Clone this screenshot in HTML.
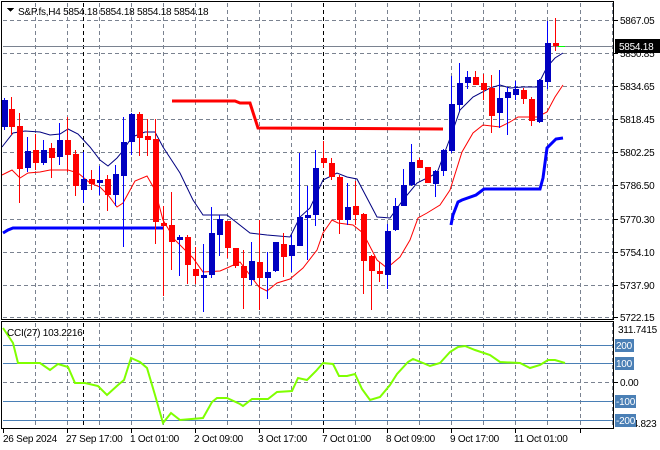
<!DOCTYPE html>
<html><head><meta charset="utf-8"><style>
html,body{margin:0;padding:0;background:#fff;width:660px;height:450px;overflow:hidden}
svg{display:block;font-family:"Liberation Sans",sans-serif;font-size:10px;letter-spacing:-0.25px}
</style></head><body>
<svg width="660" height="450" xmlns="http://www.w3.org/2000/svg" shape-rendering="crispEdges">
<rect width="660" height="450" fill="#fff"/>
<g stroke="#7a8290" stroke-dasharray="4,3" stroke-width="1">
<path d="M3 20.5H613M3 53.5H613M3 86.5H613M3 119.5H613M3 152.5H613M3 185.5H613M3 219.5H613M3 252.5H613M3 285.5H613M3 317.5H613"/>
<path d="M35.5 3V319M67.5 3V319M99.5 3V319M131.5 3V319M163.5 3V319M195.5 3V319M227.5 3V319M259.5 3V319M291.5 3V319M355.5 3V319M387.5 3V319M419.5 3V319M451.5 3V319M483.5 3V319M515.5 3V319M547.5 3V319M580.5 3V319M612.5 3V319"/>
<path d="M35.5 323V428M67.5 323V428M99.5 323V428M131.5 323V428M163.5 323V428M195.5 323V428M227.5 323V428M259.5 323V428M291.5 323V428M355.5 323V428M387.5 323V428M419.5 323V428M451.5 323V428M483.5 323V428M515.5 323V428M547.5 323V428M580.5 323V428M612.5 323V428"/>
<path d="M3 382.5H613"/>
</g>
<g stroke="#000" stroke-dasharray="4,3"><path d="M83.5 3V319M323.5 3V319M83.5 323V428M323.5 323V428"/></g>
<g stroke="#4a7fb5"><path d="M3 345.5H613M3 363.5H613M3 401.5H613M3 420.5H613"/></g>
<path d="M3 46.5H613" stroke="#7a8290"/>
<g fill="none" shape-rendering="auto" stroke-width="3">
<polyline stroke="#0000ff" points="3,233 8,230 13,228 163,228"/>
<polyline stroke="#0000ff" points="451,225 453,215 458,202 462,200 476,195 484,189 540,189 543,178 547,148 556,139 563,138"/>
<polyline stroke="#ff0000" points="172,101 235,101 240,103 250,103 258,128 443,129"/>
</g>
<g fill="none" shape-rendering="auto" stroke-width="1">
<polyline stroke="#000080" points="2,147 13,133 25,131 40,132 50,135 60,134 68,129 78,134 90,147 100,160 108,166 117,158 122,152 132,137 145,132 155,132 163,147 180,173 193,200 203,215 227,215 250,233 267,235 290,237 300,217 310,208 323,180 337,173 347,177 357,179 377,217 390,218 403,200 417,183 437,173 443,157 452,133 460,110 473,97 490,88 500,85 510,88 523,87 537,87 547,67 555,58 563,53"/>
<polyline stroke="#ff0000" points="2,175 12,170 20,178 28,173 40,172 50,170 68,170 78,173 90,183 100,187 108,195 117,207 123,203 135,181 147,176 155,190 163,220 175,240 193,258 203,272 220,271 227,268 240,262 259,287 267,291 277,283 290,279 303,268 317,250 323,233 332,220 338,223 353,225 363,233 377,260 387,268 400,257 410,240 418,218 427,213 440,205 450,190 462,152 473,133 483,125 500,127 510,122 518,117 537,117 547,112 555,97 563,85"/>
</g>
<g>
<g stroke="#0000ff"><path d="M4.5 98V130M27.5 137V172M43.5 140V165M59.5 123V165M83.5 152V203M99.5 166V195M115.5 165V206M123.5 117V247M131.5 113V155M179.5 235V276M203.5 244V312M211.5 207V278M219.5 215V256M251.5 242V285M267.5 252V299M275.5 242V272M291.5 235V272M299.5 153V246M307.5 186V260M315.5 150V226M347.5 183V225M387.5 224V289M395.5 198V231M403.5 169V206M411.5 144V186M435.5 170V197M443.5 149V176M451.5 76V153M459.5 63V111M467.5 71V89M499.5 70V128M507.5 87V135M515.5 81V100M539.5 79V123M547.5 21V89" fill="none"/></g>
<g fill="#0000c0"><rect x="2" y="100" width="6" height="27"/><rect x="25" y="151" width="6" height="17"/><rect x="41" y="150" width="6" height="13"/><rect x="57" y="140" width="6" height="17"/><rect x="81" y="179" width="6" height="11"/><rect x="97" y="180" width="6" height="3"/><rect x="113" y="174" width="6" height="21"/><rect x="121" y="142" width="6" height="34"/><rect x="129" y="114" width="6" height="28"/><rect x="177" y="237" width="6" height="3"/><rect x="201" y="275" width="6" height="3"/><rect x="209" y="233" width="6" height="42"/><rect x="217" y="219" width="6" height="16"/><rect x="249" y="261" width="6" height="19"/><rect x="265" y="272" width="6" height="6"/><rect x="273" y="242" width="6" height="29"/><rect x="289" y="245" width="6" height="11"/><rect x="297" y="217" width="6" height="29"/><rect x="305" y="215" width="6" height="3"/><rect x="313" y="168" width="6" height="47"/><rect x="345" y="207" width="6" height="13"/><rect x="385" y="231" width="6" height="44"/><rect x="393" y="206" width="6" height="24"/><rect x="401" y="185" width="6" height="21"/><rect x="409" y="162" width="6" height="23"/><rect x="433" y="171" width="6" height="13"/><rect x="441" y="150" width="6" height="21"/><rect x="449" y="104" width="6" height="47"/><rect x="457" y="83" width="6" height="22"/><rect x="465" y="77" width="6" height="6"/><rect x="497" y="98" width="6" height="15"/><rect x="505" y="92" width="6" height="6"/><rect x="513" y="89" width="6" height="6"/><rect x="537" y="80" width="6" height="42"/><rect x="545" y="43" width="6" height="39"/></g>
<g stroke="#ff0000" fill="none"><path d="M11.5 97V135M19.5 113V203M35.5 134V170M51.5 143V178M67.5 117V172M75.5 150V196M91.5 170V190M107.5 175V211M139.5 112V156M147.5 119V156M155.5 119V244M163.5 206V296M171.5 192V270M187.5 235V284M195.5 247V284M227.5 221V258M235.5 248V268M243.5 250V309M259.5 220V310M283.5 233V277M323.5 141V168M331.5 158V180M339.5 175V234M355.5 181V225M363.5 213V294M371.5 255V310M379.5 262V282M419.5 158V168M427.5 167V183M475.5 71V85M483.5 74V100M491.5 75V133M523.5 88V104M531.5 97V126M555.5 18V51"/></g>
<g fill="#ff0000"><rect x="9" y="109" width="6" height="18"/><rect x="17" y="126" width="6" height="43"/><rect x="33" y="150" width="6" height="13"/><rect x="49" y="148" width="6" height="10"/><rect x="65" y="140" width="6" height="15"/><rect x="73" y="154" width="6" height="32"/><rect x="89" y="179" width="6" height="5"/><rect x="105" y="179" width="6" height="16"/><rect x="137" y="114" width="6" height="24"/><rect x="145" y="136" width="6" height="4"/><rect x="153" y="139" width="6" height="83"/><rect x="161" y="223" width="6" height="3"/><rect x="169" y="225" width="6" height="17"/><rect x="185" y="237" width="6" height="28"/><rect x="193" y="269" width="6" height="7"/><rect x="225" y="221" width="6" height="27"/><rect x="233" y="248" width="6" height="18"/><rect x="241" y="266" width="6" height="12"/><rect x="257" y="262" width="6" height="16"/><rect x="281" y="244" width="6" height="13"/><rect x="321" y="158" width="6" height="5"/><rect x="329" y="163" width="6" height="14"/><rect x="337" y="177" width="6" height="43"/><rect x="353" y="206" width="6" height="9"/><rect x="361" y="214" width="6" height="47"/><rect x="369" y="256" width="6" height="15"/><rect x="377" y="271" width="6" height="3"/><rect x="417" y="160" width="6" height="8"/><rect x="425" y="167" width="6" height="16"/><rect x="473" y="77" width="6" height="8"/><rect x="481" y="83" width="6" height="7"/><rect x="489" y="88" width="6" height="28"/><rect x="521" y="90" width="6" height="9"/><rect x="529" y="99" width="6" height="22"/><rect x="553" y="43" width="6" height="3"/></g>
<path d="M558 46.5H565" stroke="#00ff00"/>
</g>
<polyline fill="none" shape-rendering="auto" stroke="#7fff00" stroke-width="2" points="3,328 13,343 18,363 40,363 50,370 58,364 68,367 75,383 85,383 98,386 107,395 118,385 124,380 131,358 140,362 147,368 155,395 163,423 171,413 180,420 203,418 212,402 217,398 227,398 240,404 243,406 252,399 268,399 277,392 292,391 298,378 307,380 316,371 323,363 333,364 339,376 347,376 355,374 362,389 370,400 380,397 390,385 397,374 408,362 413,359 423,363 430,366 440,363 450,352 458,347 465,346 475,350 490,355 500,362 520,363 530,368 540,365 548,360 555,360 565,363"/>
<g fill="none" stroke="#000"><rect x="1.5" y="1.5" width="612" height="318"/><rect x="1.5" y="321.5" width="612" height="107"/></g>
<g stroke="#000"><path d="M614 20.5H618M614 53.5H618M614 86.5H618M614 119.5H618M614 152.5H618M614 185.5H618M614 219.5H618M614 252.5H618M614 285.5H618M614 317.5H618M614 382.5H618"/>
<path d="M3.5 429V433M67.5 429V433M131.5 429V433M195.5 429V433M259.5 429V433M323.5 429V433M387.5 429V433M451.5 429V433M515.5 429V433M580.5 429V433"/></g>
<path d="M7 8H14L10.5 12Z" fill="#000"/>
<text x="18" y="15" fill="#000">S&amp;P.fs,H4  5854.18 5854.18 5854.18 5854.18</text>
<text x="7" y="336" fill="#000">CCI(27) 103.2216</text>
<g fill="#000">
<text x="620" y="24">5867.05</text><text x="620" y="57">5850.85</text><text x="620" y="90">5834.65</text><text x="620" y="123">5818.45</text><text x="620" y="156">5802.25</text><text x="620" y="189">5786.50</text><text x="620" y="223">5770.30</text><text x="620" y="256">5754.10</text><text x="620" y="289">5737.90</text><text x="620" y="321">5722.15</text>
<text x="618" y="333">311.7415</text><text x="620" y="386">0.00</text><text x="622" y="427">244.823</text>
</g>
<rect x="615" y="39" width="45" height="14" fill="#000"/>
<text x="619" y="50" fill="#fff">5854.18</text>
<g fill="#4a7fb5"><rect x="615" y="339" width="19" height="13"/><rect x="615" y="357" width="19" height="13"/><rect x="615" y="395" width="21" height="13"/><rect x="615" y="414" width="21" height="13"/></g>
<g fill="#fff"><text x="616" y="349">200</text><text x="616" y="367">100</text><text x="616" y="405">-100</text><text x="616" y="424">-200</text></g>
<g fill="#000">
<text x="3" y="442">26 Sep 2024</text><text x="66" y="442">27 Sep 17:00</text><text x="130" y="442">1 Oct 01:00</text><text x="194" y="442">2 Oct 09:00</text><text x="258" y="442">3 Oct 17:00</text><text x="322" y="442">7 Oct 01:00</text><text x="386" y="442">8 Oct 09:00</text><text x="450" y="442">9 Oct 17:00</text><text x="514" y="442">11 Oct 01:00</text>
</g>
</svg>
</body></html>
